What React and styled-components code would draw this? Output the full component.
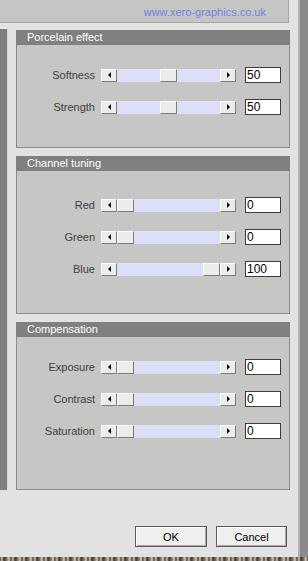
import React from "react";
import styled, { createGlobalStyle } from "styled-components";

const GlobalStyle = createGlobalStyle`
    body {
        margin: 0;
        background: #e2e2e0;
        font-family: "Liberation Sans", Arial, sans-serif;
    }
`;

const Page = styled.div`
    width: 308px;
    height: 561px;
    overflow: hidden;
    display: flex;
    flex-direction: column;
`;

const Window = styled.div`
    display: flex;
    height: 557px;
`;

const Dialog = styled.div`
    width: 298px;
    background: #e2e2e0;
    display: flex;
    flex-direction: column;
`;

const EdgeStrip = styled.div`
    flex: 1;
    background: #8a8a8a;
    border-left: 2px solid #b2b2b0;
`;

/* bit of the photo peeking out under the dialog */
const PhotoStrip = styled.div`
    height: 4px;
    background: repeating-linear-gradient(
        90deg,
        #5e5042 0px,
        #c9bfae 2px,
        #3b3229 4px,
        #8a7a66 7px,
        #d6cfc2 9px,
        #4a3f34 11px
    );
`;

const TopStrip = styled.div`
    width: 289px;
    height: 23px;
    box-sizing: border-box;
    padding: 1px 22px 0 0;
    background: #c5c5c3;
    border-bottom: 1px solid #a6a6a4;
    border-right: 1px solid #a6a6a4;
    display: flex;
    align-items: center;
    justify-content: flex-end;
    font-size: 11px;
    color: #7c7ce6;
`;

const Body = styled.div`
    display: flex;
    align-items: flex-start;
    margin-top: 1px;
`;

const SideRail = styled.div`
    width: 7px;
    height: 461px;
    margin-top: 4px;
    background: #7f7f7f;
    border-top: 1px solid #ececec;
    border-right: 1px solid #d4d4d2;
`;

const Groups = styled.div`
    width: 274px;
    margin: 6px 0 0 8px;
    display: flex;
    flex-direction: column;
    gap: 8px;
`;

const GroupBox = styled.div`
    display: flex;
    flex-direction: column;
`;

const GroupHeader = styled.div`
    height: 15px;
    line-height: 15px;
    padding-left: 11px;
    background: #808080;
    color: #ffffff;
    font-size: 11px;
`;

const GroupBody = styled.div`
    background: #c6c6c4;
    border: 1px solid #8c8c8a;
    border-top: none;
    padding: ${p => p.$top}px 0 ${p => p.$bottom}px 0;
    display: flex;
    flex-direction: column;
    gap: 16px;
`;

const Row = styled.div`
    display: flex;
    align-items: center;
    height: 16px;
`;

const Label = styled.div`
    width: 78px;
    text-align: right;
    font-size: 11px;
    color: #404040;
`;

const Slider = styled.div`
    display: flex;
    width: 135px;
    height: 13px;
    margin-left: 6px;
`;

const ArrowButton = styled.div`
    width: 16px;
    height: 13px;
    box-sizing: border-box;
    background: #ececea;
    border-top: 1px solid #ffffff;
    border-left: 1px solid #ffffff;
    border-bottom: 1px solid #7c7c7c;
    border-right: 1px solid #7c7c7c;
    display: flex;
    align-items: center;
    justify-content: center;

    &::after {
        content: "";
        width: 0;
        height: 0;
        border-top: 3px solid transparent;
        border-bottom: 3px solid transparent;
        ${p => p.$dir === "left"
            ? "border-right: 3px solid #000;"
            : "border-left: 3px solid #000;"}
    }
`;

const Track = styled.div`
    position: relative;
    flex: 1;
    background: #dedef8;
`;

const Thumb = styled.div`
    position: absolute;
    top: 0;
    width: 17px;
    height: 13px;
    box-sizing: border-box;
    background: #ececea;
    border-top: 1px solid #ffffff;
    border-left: 1px solid #ffffff;
    border-bottom: 1px solid #7c7c7c;
    border-right: 1px solid #7c7c7c;
`;

const ValueBox = styled.input`
    width: 36px;
    height: 16px;
    box-sizing: border-box;
    margin-left: 9px;
    padding: 0 0 0 1px;
    border: 1px solid #3c3c3c;
    background: #ffffff;
    font-family: "Liberation Sans", Arial, sans-serif;
    font-size: 12px;
    color: #000;
    outline: none;
`;

const Footer = styled.div`
    display: flex;
    justify-content: flex-end;
    gap: 9px;
    margin-top: 36px;
    padding-right: 11px;
`;

const Button = styled.button`
    width: ${p => p.$w}px;
    height: 21px;
    padding: 0;
    background: #efefed;
    border: 1px solid #5a5a5a;
    box-shadow: inset 1px 1px #ffffff, inset -1px -1px #a8a8a6;
    font-family: "Liberation Sans", Arial, sans-serif;
    font-size: 11px;
    color: #000;
`;

const TRACK_W = 103;
const THUMB_W = 17;

const SliderRow = ({ label, value }) => (
    <Row>
        <Label>{label}</Label>
        <Slider>
            <ArrowButton $dir="left" />
            <Track>
                <Thumb style={{ left: Math.round((value / 100) * (TRACK_W - THUMB_W)) }} />
            </Track>
            <ArrowButton $dir="right" />
        </Slider>
        <ValueBox readOnly value={value} />
    </Row>
);

const Group = ({ title, top, bottom, rows }) => (
    <GroupBox>
        <GroupHeader>{title}</GroupHeader>
        <GroupBody $top={top} $bottom={bottom}>
            {rows.map(r => (
                <SliderRow key={r.label} label={r.label} value={r.value} />
            ))}
        </GroupBody>
    </GroupBox>
);

const App = () => {
    return (
        <>
            <GlobalStyle />
            <Page>
                <Window>
                    <Dialog>
                        <TopStrip>www.xero-graphics.co.uk</TopStrip>
                        <Body>
                            <SideRail />
                            <Groups>
                                <Group
                                    title="Porcelain effect"
                                    top={22}
                                    bottom={32}
                                    rows={[
                                        { label: "Softness", value: 50 },
                                        { label: "Strength", value: 50 },
                                    ]}
                                />
                                <Group
                                    title="Channel tuning"
                                    top={26}
                                    bottom={36}
                                    rows={[
                                        { label: "Red", value: 0 },
                                        { label: "Green", value: 0 },
                                        { label: "Blue", value: 100 },
                                    ]}
                                />
                                <Group
                                    title="Compensation"
                                    top={22}
                                    bottom={50}
                                    rows={[
                                        { label: "Exposure", value: 0 },
                                        { label: "Contrast", value: 0 },
                                        { label: "Saturation", value: 0 },
                                    ]}
                                />
                            </Groups>
                        </Body>
                        <Footer>
                            <Button $w={72}>OK</Button>
                            <Button $w={71}>Cancel</Button>
                        </Footer>
                    </Dialog>
                    <EdgeStrip />
                </Window>
                <PhotoStrip />
            </Page>
        </>
    );
};

export default App;
